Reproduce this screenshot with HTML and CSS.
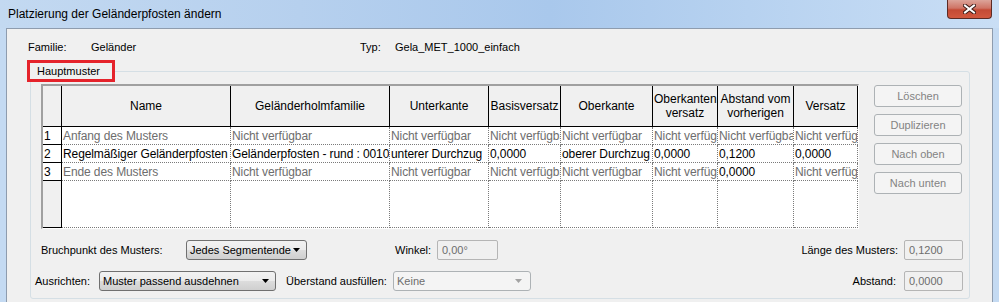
FILE: index.html
```html
<!doctype html>
<html lang="de">
<head>
	<meta charset="UTF-8">
	<title>Platzierung der Geländerpfosten ändern</title>
	<link rel="stylesheet" href="styles.css">
</head>
<body>
	<div class="window">
		<div class="titlebar">
			<span class="title">Platzierung der Geländerpfosten ändern</span>
			<div class="close">
				<svg width="13" height="10" viewBox="0 0 13 10">
					<path d="M2 1.5L11 8.5M11 1.5L2 8.5" stroke="#3b1a16" stroke-width="4" stroke-linecap="square"/>
					<path d="M2 1.5L11 8.5M11 1.5L2 8.5" stroke="#fff" stroke-width="2" stroke-linecap="square"/>
				</svg>
			</div>
		</div>
		<div class="client">
			<div class="info">
				<span>Familie:</span>
				<span>Geländer</span>
				<span>Typ:</span>
				<span>Gela_MET_1000_einfach</span>
			</div>
			<fieldset class="group">
				<legend>Hauptmuster</legend>
				<div class="main">
					<div class="grid-frame">
						<table class="grid">
							<colgroup>
								<col class="c-rh">
								<col class="c-name">
								<col class="c-holm">
								<col class="c-unter">
								<col class="c-basis">
								<col class="c-ober">
								<col class="c-ov">
								<col class="c-abst">
								<col class="c-vers">
							</colgroup>
							<tr class="head">
								<th class="rh"></th>
								<th>Name</th>
								<th>Geländerholmfamilie</th>
								<th>Unterkante</th>
								<th>Basisversatz</th>
								<th>Oberkante</th>
								<th>Oberkanten versatz</th>
								<th>Abstand vom vorherigen</th>
								<th>Versatz</th>
							</tr>
							<tr class="na">
								<td class="rh">1</td>
								<td>Anfang des Musters</td>
								<td>Nicht verfügbar</td>
								<td>Nicht verfügbar</td>
								<td>Nicht verfügbar</td>
								<td>Nicht verfügbar</td>
								<td>Nicht verfügbar</td>
								<td>Nicht verfügbar</td>
								<td>Nicht verfügbar</td>
							</tr>
							<tr>
								<td class="rh">2</td>
								<td>Regelmäßiger Geländerpfosten</td>
								<td>Geländerpfosten - rund : 0010</td>
								<td>unterer Durchzug</td>
								<td>0,0000</td>
								<td>oberer Durchzug</td>
								<td>0,0000</td>
								<td>0,1200</td>
								<td>0,0000</td>
							</tr>
							<tr class="na">
								<td class="rh">3</td>
								<td>Ende des Musters</td>
								<td>Nicht verfügbar</td>
								<td>Nicht verfügbar</td>
								<td>Nicht verfügbar</td>
								<td>Nicht verfügbar</td>
								<td>Nicht verfügbar</td>
								<td class="val">0,0000</td>
								<td>Nicht verfügbar</td>
							</tr>
							<tr class="empty">
								<td class="rh"></td>
								<td></td><td></td><td></td><td></td><td></td><td></td><td></td><td></td>
							</tr>
						</table>
					</div>
					<div class="buttons">
						<div class="btn">Löschen</div>
						<div class="btn">Duplizieren</div>
						<div class="btn">Nach oben</div>
						<div class="btn">Nach unten</div>
					</div>
				</div>
				<div class="opts">
					<span class="l-bruch">Bruchpunkt des Musters:</span>
					<div class="combo c-bruch">
						<span>Jedes Segmentende</span>
						<svg width="7" height="4" viewBox="0 0 7 4"><path d="M0 0h7L3.5 4z" fill="#000"/></svg>
					</div>
					<span class="l-winkel">Winkel:</span>
					<div class="field f-winkel">0,00°</div>
					<span class="l-right">Länge des Musters:</span>
					<div class="field">0,1200</div>
				</div>
				<div class="opts opts-2">
					<span class="l-aus">Ausrichten:</span>
					<div class="combo c-aus">
						<span>Muster passend ausdehnen</span>
						<svg width="7" height="4" viewBox="0 0 7 4"><path d="M0 0h7L3.5 4z" fill="#000"/></svg>
					</div>
					<span class="l-ueber">Überstand ausfüllen:</span>
					<div class="combo c-keine off">
						<span>Keine</span>
						<svg width="7" height="4" viewBox="0 0 7 4"><path d="M0 0h7L3.5 4z" fill="#a3a3a3"/></svg>
					</div>
					<span class="l-right l-abst">Abstand:</span>
					<div class="field">0,0000</div>
				</div>
			</fieldset>
		</div>
	</div>
</body>
</html>
```

FILE: styles.css
```css
*{
	margin:0;
	padding:0;
	box-sizing:border-box;
}
body{
	font:11px "Liberation Sans", Arial, sans-serif;
	color:#000;
	overflow:hidden;
}
.window{
	width:999px;
	height:302px;
	overflow:hidden;
	background:#c4daf2;
}
.titlebar{
	height:28px;
	display:flex;
	align-items:center;
	padding-left:8px;
	background:linear-gradient(to right, #c3d9f1 0%, #b6d0ee 30%, #a9c8ec 55%, #b7d2f0 75%, #c9def5 100%);
}
.title{
	font-size:12px;
	margin-top:-1px;
}
.close{
	margin-left:auto;
	margin-right:7px;
	align-self:flex-start;
	width:45px;
	height:19px;
	border:1px solid #5c2b25;
	border-top:0;
	border-radius:0 0 4px 4px;
	background:linear-gradient(#dca49a 0%, #cf7465 45%, #c44a35 55%, #d2583f 100%);
	display:flex;
	align-items:center;
	justify-content:center;
}
.client{
	margin:0 6px;
	height:290px;
	border:1px solid #8e9cae;
	background:#f0f0f0;
	padding-top:11px;
}
.info{
	display:grid;
	grid-template-columns:63px 269px 35px auto;
	padding-left:21px;
	line-height:14px;
	height:14px;
}
.group{
	margin:6px 22px 0 23px;
	padding:2px 6px 7px 10px;
	border:1px solid #d5dfe5;
	border-radius:3px;
	min-width:0;
}
.group legend{
	margin-left:-14px;
	border:3px solid #e5232b;
	padding:0 12px 0 7px;
	line-height:16px;
}
.main{
	display:flex;
	align-items:flex-start;
}
.grid-frame{
	width:818px;
	flex-shrink:0;
	border-style:solid;
	border-width:2px 1px 1px 2px;
	border-color:#a0a0a0 #fff #fff #a0a0a0;
	background:#fff;
}
.grid{
	width:815px;
	table-layout:fixed;
	border-collapse:separate;
	border-spacing:0;
	font-size:12px;
	letter-spacing:-0.1px;
}
.grid col.c-rh{width:19px;}
.grid col.c-name{width:169px;}
.grid col.c-holm{width:159px;}
.grid col.c-unter{width:99px;}
.grid col.c-basis{width:72px;}
.grid col.c-ober{width:92px;}
.grid col.c-ov{width:65px;}
.grid col.c-abst{width:76px;}
.grid col.c-vers{width:64px;}
.grid td,
.grid th{
	height:18px;
	padding:0 1px;
	overflow:hidden;
	white-space:nowrap;
	text-align:left;
	font-weight:normal;
	border-right:1px dotted #7a7a7a;
	border-bottom:1px dotted #7a7a7a;
	line-height:16px;
}
.grid tr.head th{
	height:41px;
	background:#f0f0f0;
	border-right:1px solid #000;
	border-bottom:1px solid #000;
	white-space:normal;
	text-align:center;
	line-height:14px;
	letter-spacing:0;
}
.grid .rh{
	border-right:1px solid #000;
	border-bottom:1px solid #000;
	background:#fff;
}
.grid tr.na td{
	color:#6d6d6d;
}
.grid tr.na td.rh,
.grid tr.na td.val{
	color:#000;
}
.grid tr.empty td{
	height:47px;
}
.grid tr.empty td.rh{
	background:#f0f0f0;
}
.buttons{
	margin-left:15px;
	margin-top:1px;
	display:flex;
	flex-direction:column;
	gap:7px;
}
.btn{
	width:88px;
	height:22px;
	line-height:20px;
	text-align:center;
	color:#838383;
	background:#f4f4f4;
	border:1px solid #adb2b5;
	border-radius:3px;
}
.opts{
	display:flex;
	align-items:center;
	height:20px;
	margin-top:11px;
	white-space:nowrap;
}
.opts > *{
	flex-shrink:0;
}
.opts-2{
	margin-left:-6px;
}
.combo{
	height:20px;
	display:flex;
	align-items:center;
	justify-content:space-between;
	padding:0 6px 0 3px;
	border:1px solid #707070;
	border-radius:3px;
	background:linear-gradient(#f2f2f2 0%, #ebebeb 50%, #dddddd 50%, #cfcfcf 100%);
}
.combo.off{
	background:#f4f4f4;
	border-color:#adb2b5;
	color:#6d6d6d;
	padding-right:8px;
}
.field{
	width:59px;
	height:20px;
	line-height:18px;
	padding-left:4px;
	border:1px solid #b5b5b5;
	border-radius:2px;
	color:#6d6d6d;
	background:#f0f0f0;
}
.l-bruch{width:145px;}
.c-bruch{width:121px;}
.l-winkel{margin-left:88px;width:42px;}
.f-winkel{width:61px;}
.l-right{margin-left:auto;margin-right:6px;}
.l-abst{margin-right:8px;}
.l-aus{width:64px;}
.c-aus{width:177px;}
.l-ueber{margin-left:10px;width:107px;}
.c-keine{width:138px;}
```
